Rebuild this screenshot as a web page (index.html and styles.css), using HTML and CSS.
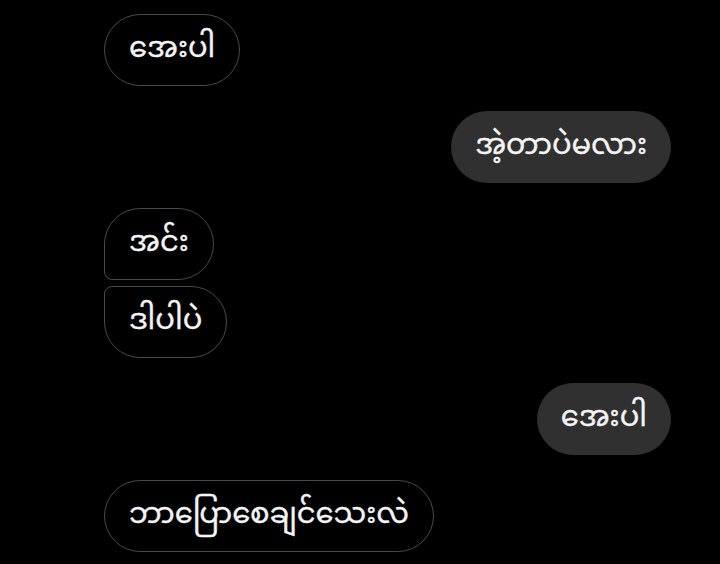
FILE: index.html
```html
<!DOCTYPE html>
<html lang="my">
<head>
  <meta charset="UTF-8">
  <meta name="viewport" content="width=device-width, initial-scale=1.0">
  <title>Chat</title>
  <link rel="stylesheet" href="styles.css">
</head>
<body>
  <div class="chat">
    <div class="msg in">အေးပါ</div>
    <div class="msg out">အဲ့တာပဲမလား</div>
    <div class="group">
      <div class="msg in first">အင်း</div>
      <div class="msg in last">ဒါပါပဲ</div>
    </div>
    <div class="msg out">အေးပါ</div>
    <div class="msg in">ဘာပြောစေချင်သေးလဲ</div>
  </div>
</body>
</html>
```
FILE: styles.css
```css
html {
  --bg: #000;
  --bubble-out: #303030;
  --line: #4a4a4a;
  --text: #f4f4f4;
}
body {
  margin: 0;
  background: var(--bg);
  color: var(--text);
  font-family: "Noto Sans Myanmar", "Padauk", "Myanmar Text", "Noto Sans", sans-serif;
}
.chat {
  display: flex;
  flex-direction: column;
  gap: 25px;
  padding: 14px 49px 0 104px;
}
.group {
  display: flex;
  flex-direction: column;
  gap: 6px;
}
.msg {
  box-sizing: border-box;
  height: 72px;
  display: flex;
  align-items: center;
  padding: 0 24px;
  font-size: 29px;
  -webkit-text-stroke: 0.4px var(--text);
  border-radius: 36px;
  width: fit-content;
}
.in {
  border: 1.5px solid var(--line);
  align-self: flex-start;
}
.out {
  background: var(--bubble-out);
  align-self: flex-end;
}
.first { border-bottom-left-radius: 8px; }
.last { border-top-left-radius: 8px; }
```
